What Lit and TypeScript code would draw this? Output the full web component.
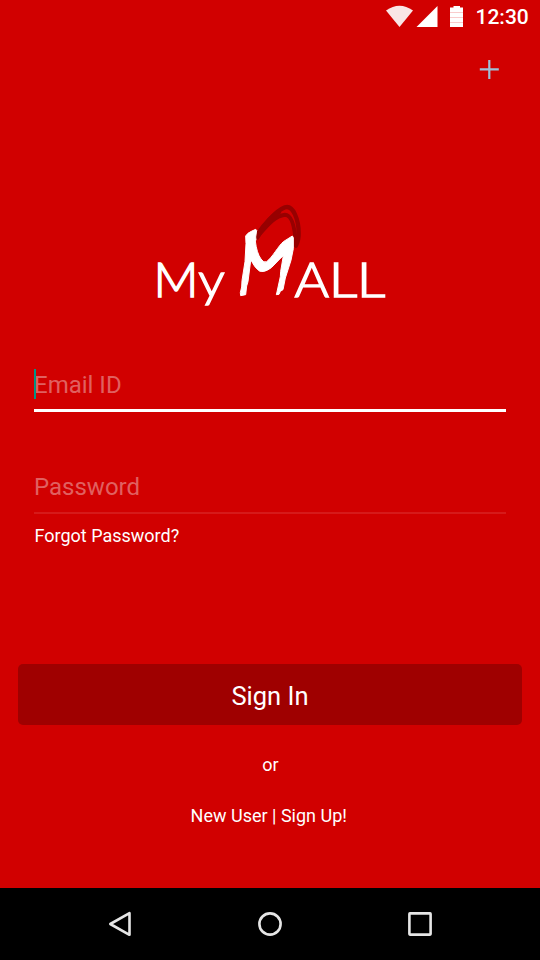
import { LitElement, html, css, svg } from "lit";
import { customElement } from "lit/decorators.js";

@customElement("status-bar")
class StatusBar extends LitElement {
  static styles = css`
    :host { display: block; height: 36px; }
    .bar { display: flex; height: 36px; justify-content: flex-end; padding-right: 11px; }
    svg { width: 82px; height: 36px; flex: none; }
    .time { width: 53.500px; margin-left: 8.500px; font: 500 21px/34px Roboto, sans-serif; color: #fff; white-space: nowrap; }
  `;
  render() {
    return html`<div class="bar">
      <svg viewBox="385 0 82 36">
        <path d="M386 10.5Q399.500 1 413 10.500L399.500 27Z" fill="#f9e5e5" />
        <path d="M416.500 27L437.500 6V27Z" fill="#fff" />
        <path d="M450 7.500H453.500V6H460V7.500H463V27H450Z" fill="#fff" />
        <path d="M450 12.500H463M450 17.500H463M450 22.500H463" stroke="#f9cccc" stroke-width="1" />
      </svg>
      <span class="time">12:30</span>
    </div>`;
  }
}

@customElement("mall-logo")
class MallLogo extends LitElement {
  static styles = css`
    :host { display: block; }
    svg { display: block; width: 240px; height: 110px; margin: 0 auto; }
    .word { font-family: Lato, sans-serif; font-weight: 300; font-size: 46.500px; fill: #fff; stroke: #fff; stroke-width: 1.400px; }
  `;
  letter(ch: string, x: number, w: number) {
    return svg`<text class="word" x=${x} y="296.700" textLength=${w} lengthAdjust="spacingAndGlyphs">${ch}</text>`;
  }
  render() {
    return html`<svg viewBox="150 200 240 110">
      ${this.letter("M", 153.5, 45)}
      ${this.letter("y", 198.3, 26.5)}
      ${this.letter("A", 294.4, 34.5)}
      ${this.letter("L", 328.7, 28.5)}
      ${this.letter("L", 356.7, 28.5)}
      <g transform="translate(230 200) scale(.33333)">
        <path d="M82 112C102 77 132 36 165 22C190 14 206 60 206 99Q207 117 198 137" fill="none" stroke="#970000" stroke-width="13" stroke-linecap="round" />
        <path d="M80 112C110 78 132 48 165 44C184 44 194 75 198 132" fill="none" stroke="#970000" stroke-width="12" stroke-linecap="round" />
        <path d="M83 102Q117 52 151 33" fill="none" stroke="#970000" stroke-width="13" />
        <path d="M47 108Q52 99 64 94L77 88L80 91L77 111L78 120L76 123Q80 159 93 177Q101 190 110 185C128 171 145 138 160 125L187 108L190 113L190 146L183 181L166 234L159 269L151 274L147 283L139 284L141 276L151 230L152 214L160 167C145 180 135 193 124 203Q102 219 88 213Q74 203 65 184L62 182L54 245L50 258L47 284L32 287L31 278L35 261L36 242L45 185L48 131Z" fill="#fff" stroke="#fff" stroke-width="3" stroke-linejoin="round" />
      </g>
    </svg>`;
  }
}

@customElement("nav-bar")
class NavBar extends LitElement {
  static styles = css`
    :host { display: block; height: 72px; background: #000; }
    .nav { display: flex; height: 72px; justify-content: center; align-items: center; gap: 114px; }
    svg { width: 36px; height: 36px; fill: none; stroke: #e6e6e6; stroke-width: 2.600; stroke-linejoin: round; }
  `;
  render() {
    return html`<div class="nav">
      <svg viewBox="0 0 36 36"><path d="M27.500 7.200V28.800L8.300 18Z" /></svg>
      <svg viewBox="0 0 36 36"><circle cx="18" cy="18" r="10.600" /></svg>
      <svg viewBox="0 0 36 36"><rect x="7.400" y="7.400" width="21.200" height="21.200" rx=".5" /></svg>
    </div>`;
  }
}

@customElement("app-root")
class AppRoot extends LitElement {
  static styles = css`
    :host {
      display: flex; flex-direction: column; width: 540px; height: 960px; overflow: hidden;
      background: #d10000; color: #fff; font-family: Roboto, sans-serif;
    }
    .toolbar { display: flex; justify-content: flex-end; height: 66px; padding: 22px 39px 0 0; box-sizing: border-box; }
    .toolbar svg { width: 22px; height: 22px; }
    mall-logo { margin-top: 98px; }
    .form { margin: 50px 34px 0; }
    .field { display: flex; align-items: center; height: 48px; font-size: 24px; color: #e06060; box-sizing: border-box; }
    .email { border-bottom: 3px solid #fff; height: 52px; padding-bottom: 1px; }
    .email .label { padding-top: 2px; }
    .email .caret { width: 2px; height: 30px; margin-right: -2px; background: #009688; }
    .password { margin-top: 52px; height: 50px; padding-bottom: 2px; border-bottom: 2px solid #d61a1a; }
    .forgot { margin-top: 10px; font-size: 18px; line-height: 24px; padding-left: .5px; }
    .signin {
      margin: 116px 18px 0; height: 61px; border-radius: 5px; background: #9f0000;
      font-size: 25.500px; line-height: 64px; text-align: center;
    }
    .or, .signup { font-size: 18px; line-height: 24px; text-align: center; }
    .or { margin-top: 28px; padding-left: 1px; }
    .signup { margin-top: 27px; padding-right: 2.500px; }
    nav-bar { margin-top: auto; }
  `;
  render() {
    return html`
      <status-bar></status-bar>
      <div class="toolbar">
        <svg viewBox="0 0 22 22"><path d="M.8 11.300H19.800M10.300 2V21" stroke="#9fc0d8" stroke-width="2.200" /></svg>
      </div>
      <mall-logo></mall-logo>
      <div class="form">
        <div class="field email"><span class="caret"></span><span class="label">Email ID</span></div>
        <div class="field password">Password</div>
        <div class="forgot">Forgot Password?</div>
      </div>
      <div class="signin">Sign In</div>
      <div class="or">or</div>
      <div class="signup">New User | Sign Up!</div>
      <nav-bar></nav-bar>
    `;
  }
}
